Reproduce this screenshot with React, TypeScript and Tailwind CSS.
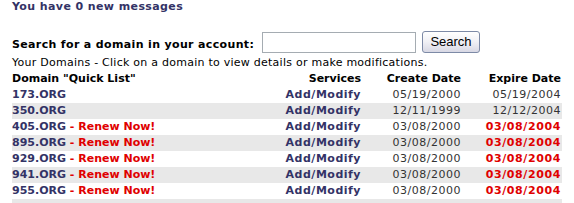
const domains = [
  {name: '173.ORG', renew: false, created: '05/19/2000', expires: '05/19/2004'},
  {name: '350.ORG', renew: false, created: '12/11/1999', expires: '12/12/2004'},
  {name: '405.ORG', renew: true, created: '03/08/2000', expires: '03/08/2004'},
  {name: '895.ORG', renew: true, created: '03/08/2000', expires: '03/08/2004'},
  {name: '929.ORG', renew: true, created: '03/08/2000', expires: '03/08/2004'},
  {name: '941.ORG', renew: true, created: '03/08/2000', expires: '03/08/2004'},
  {name: '955.ORG', renew: true, created: '03/08/2000', expires: '03/08/2004'},
];

export default function App() {
  return (
    <div className="w-[574px] h-[203px] overflow-hidden bg-white pl-3 font-['Verdana','DejaVu_Sans',sans-serif] text-[11px] leading-[16px] text-[#333333]">
      <p className="font-bold text-[#333366] leading-[14px] tracking-[0.4px]">You have 0 new messages</p>

      <form className="mt-[17px] flex items-start" onSubmit={e => e.preventDefault()}>
        <label className="w-[250px] mt-[6px] font-bold text-black whitespace-nowrap tracking-[0.35px]">
          Search for a domain in your account:
        </label>
        <input
          type="text"
          className="w-[154px] h-[21px] mt-[1px] border border-[#a5acb2] bg-white px-1 outline-none"
        />
        <button
          type="submit"
          className="ml-[6px] w-[58px] h-[22px] rounded-[3px] border border-[#7d8aa6] bg-gradient-to-b from-white via-[#f0f0f5] to-[#d8d8e4] font-['Liberation_Sans',Arial,sans-serif] text-[13px] leading-[20px] text-black"
        >
          Search
        </button>
      </form>

      <p className="mt-[2px] text-black tracking-[0.25px]">
        Your Domains - Click on a domain to view details or make modifications.
      </p>

      <table className="w-[550px] table-fixed border-collapse">
        <colgroup>
          <col className="w-[250px]" />
          <col className="w-[100px]" />
          <col className="w-[100px]" />
          <col className="w-[100px]" />
        </colgroup>
        <thead>
          <tr className="h-[16px] font-bold text-black">
            <th className="p-0 text-left font-bold">Domain "Quick List"</th>
            <th className="p-0 pr-[1px] text-right font-bold">Services</th>
            <th className="p-0 pr-[1px] text-right font-bold">Create Date</th>
            <th className="p-0 pr-[1px] text-right font-bold">Expire Date</th>
          </tr>
        </thead>
        <tbody>
          {domains.map((d, i) => (
            <tr key={d.name} className={i % 2 === 1 ? 'h-[16px] bg-[#e8e8e8]' : 'h-[16px]'}>
              <td className="p-0 font-bold whitespace-nowrap">
                <a href="#" className="text-[#333366]">{d.name}</a>
                {d.renew && <span className="text-[#e00000]"> - Renew Now!</span>}
              </td>
              <td className="p-0 pr-[1px] text-right font-bold tracking-[0.5px]">
                <a href="#" className="text-[#333366]">Add/Modify</a>
              </td>
              <td className="p-0 pr-[1px] text-right tracking-[0.5px]">{d.created}</td>
              <td
                className={
                  d.renew
                    ? 'p-0 pr-[1px] text-right font-bold text-[#e00000] tracking-[0.6px]'
                    : 'p-0 pr-[1px] text-right tracking-[0.5px]'
                }
              >
                {d.expires}
              </td>
            </tr>
          ))}
          <tr className="h-[16px] bg-[#e8e8e8]">
            <td className="p-0" colSpan={4}></td>
          </tr>
        </tbody>
      </table>
    </div>
  );
}
